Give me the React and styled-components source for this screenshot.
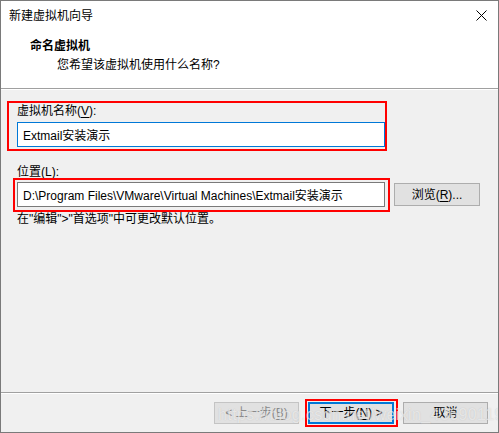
import React from "react";
import styled, { createGlobalStyle } from "styled-components";

const Global = createGlobalStyle`
  html, body { margin: 0; padding: 0; background: #f0f0f0; }
  * { box-sizing: border-box; }
  body { font-family: "Liberation Sans", "Noto Sans CJK SC", sans-serif; font-size: 12px; color: #000; }
`;

const Window = styled.div`
  position: relative;
  width: 499px;
  height: 433px;
  border: 1px solid #7a7a7a;
  background: #f0f0f0;
  display: flex;
  flex-direction: column;
  overflow: hidden;
`;

const Header = styled.div`
  height: 88px;
  background: #fff;
  border-bottom: 1px solid #a0a0a0;
  box-shadow: 0 1px 0 #fff;
  display: flex;
  flex-direction: column;
`;

const TitleBar = styled.div`
  height: 29px;
  display: flex;
  align-items: center;
  justify-content: space-between;
  padding: 0 9px 0 8px;
  line-height: 16px;
`;

const Close = styled.div`
  width: 12px;
  height: 12px;
  display: flex;
  margin-right: 1px;
`;

const Heading = styled.div`
  font-weight: bold;
  padding-left: 29px;
  line-height: 16px;
  margin-top: 8px;
`;

const Sub = styled.div`
  padding-left: 56px;
  line-height: 16px;
  margin-top: 3px;
`;

const Body = styled.div`
  flex: 1;
  display: flex;
  flex-direction: column;
  padding: 12px 0 0 0;
`;

const RedBox = styled.div`
  border: 2px solid #ff0000;
  display: flex;
  flex-direction: ${(p) => (p.$col ? "column" : "row")};
  margin-left: ${(p) => p.$ml}px;
  width: ${(p) => p.$w}px;
  padding: ${(p) => p.$pad};
`;

const Label = styled.div`
  line-height: 16px;
  padding-left: ${(p) => p.$pl || 0}px;
  margin-top: ${(p) => p.$mt || 0}px;
`;

const U = styled.span`
  text-decoration: underline;
  text-underline-offset: 2px;
`;

const Input = styled.div`
  height: 25px;
  width: 368px;
  background: #fff;
  border: 1px solid ${(p) => (p.$focus ? "#0078d7" : "#7a7a7a")};
  display: flex;
  align-items: center;
  padding-left: 5px;
  margin-top: ${(p) => p.$mt || 0}px;
  white-space: nowrap;
  overflow: hidden;
`;

const Row = styled.div`
  display: flex;
  align-items: flex-start;
  margin-top: ${(p) => p.$mt || 0}px;
`;

const Button = styled.div`
  height: ${(p) => p.$h || 22}px;
  width: ${(p) => p.$w || 85}px;
  background: #e1e1e1;
  border: ${(p) => (p.$default ? "2px solid #0078d7" : p.$disabled ? "1px solid #c4c4c4" : "1px solid #adadad")};
  color: ${(p) => (p.$disabled ? "#8a8a8a" : "#000")};
  display: flex;
  align-items: center;
  justify-content: center;
  line-height: 16px;
  margin-left: ${(p) => p.$ml || 0}px;
  margin-top: ${(p) => p.$mt || 0}px;
  white-space: nowrap;
`;

const Spacer = styled.div`
  flex: 1;
`;

const Footer = styled.div`
  height: 40px;
  border-top: 1px solid #a0a0a0;
  box-shadow: inset 0 1px 0 #fff;
  display: flex;
  align-items: flex-start;
  padding: 6px 0 0 213px;
`;

const NextRing = styled.div`
  border: 2px solid #ff0000;
  padding: 1px 2px 1px 1px;
  margin-left: 6px;
  display: flex;
`;

const Watermark = styled.div`
  position: absolute;
  left: 217px;
  top: 404px;
  font-family: "Liberation Sans", "Noto Sans", sans-serif;
  font-size: 16px;
  line-height: 20px;
  color: rgba(255, 255, 255, 0.6);
  text-shadow: 0 0 1px rgba(120, 120, 120, 0.35);
  pointer-events: none;
  white-space: nowrap;
  letter-spacing: 0.4px;
`;

export default function App() {
  return (
    <>
      <Global />
      <Window>
        <Header>
          <TitleBar>
            <span>新建虚拟机向导</span>
            <Close>
              <svg width="11" height="11" viewBox="0 0 11 11">
                <path d="M0.5 0.5 L10.5 10.5 M10.5 0.5 L0.5 10.5" stroke="#000" strokeWidth="1" fill="none" />
              </svg>
            </Close>
          </TitleBar>
          <Heading>命名虚拟机</Heading>
          <Sub>您希望该虚拟机使用什么名称?</Sub>
        </Header>
        <Body>
          <RedBox $col $ml={6} $w={380} $pad="0 0 2px 8px">
            <Label>虚拟机名称(<U>V</U>):</Label>
            <Input $focus $mt={3}>Extmail安装演示</Input>
          </RedBox>
          <Label $pl={16} $mt={13}>位置(<U>L</U>):</Label>
          <Row $mt={-2}>
            <RedBox $ml={12} $w={377} $pad="2px 3px 3px 2px">
              <Input>D:\Program Files\VMware\Virtual Machines\Extmail安装演示</Input>
            </RedBox>
            <Button $w={86} $h={23} $ml={4} $mt={5}>
              浏览(<U>R</U>)...
            </Button>
          </Row>
          <Label $pl={16} $mt={-1}>在"编辑"&gt;"首选项"中可更改默认位置。</Label>
          <Spacer />
        </Body>
        <Footer>
          <Button $disabled $mt={3}>
            &lt; 上一步(<U>B</U>)
          </Button>
          <NextRing>
            <Button $default $w={86}>
              下一步(<U>N</U>) &gt;
            </Button>
          </NextRing>
          <Button $ml={5} $mt={3}>
            取消
          </Button>
        </Footer>
        <Watermark>https://blog.csdn.net/weixin_43690119</Watermark>
      </Window>
    </>
  );
}
